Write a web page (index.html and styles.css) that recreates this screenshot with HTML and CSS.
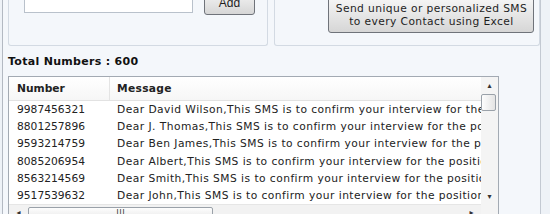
FILE: index.html
```html
<!DOCTYPE html>
<html lang="en">
<head>
  <meta charset="UTF-8">
  <title>Bulk SMS - Numbers</title>
  <link rel="stylesheet" href="styles.css">
</head>
<body>
  <div class="frame">
    <div class="groups">
      <div class="group group-left">
        <input class="textbox" type="text">
        <button class="btn btn-add">Add</button>
      </div>
      <div class="group group-right">
        <button class="btn btn-excel">Send unique or personalized SMS<br>to every Contact using Excel</button>
      </div>
    </div>

    <div class="total">Total Numbers : 600</div>

    <div class="grid">
      <div class="grid-body">
        <div class="grid-head">
          <div class="col-num">Number</div>
          <div class="col-msg">Message</div>
        </div>
        <div class="grid-row">
          <div class="col-num">9987456321</div>
          <div class="col-msg">Dear David Wilson,This SMS is to confirm your interview for the position</div>
        </div>
        <div class="grid-row">
          <div class="col-num">8801257896</div>
          <div class="col-msg">Dear J. Thomas,This SMS is to confirm your interview for the position</div>
        </div>
        <div class="grid-row">
          <div class="col-num">9593214759</div>
          <div class="col-msg">Dear Ben James,This SMS is to confirm your interview for the position</div>
        </div>
        <div class="grid-row">
          <div class="col-num">8085206954</div>
          <div class="col-msg">Dear Albert,This SMS is to confirm your interview for the position</div>
        </div>
        <div class="grid-row">
          <div class="col-num">8563214569</div>
          <div class="col-msg">Dear Smith,This SMS is to confirm your interview for the position</div>
        </div>
        <div class="grid-row">
          <div class="col-num">9517539632</div>
          <div class="col-msg">Dear John,This SMS is to confirm your interview for the position</div>
        </div>
        <div class="hscroll">
          <span class="arrow">&#9666;</span>
          <div class="hthumb"><span class="grip">|||</span></div>
          <span class="arrow arrow-right">&#9656;</span>
        </div>
      </div>
      <div class="vscroll">
        <span class="arrow">&#9652;</span>
        <div class="vthumb"></div>
        <div class="vtrack"></div>
        <span class="arrow">&#9662;</span>
      </div>
    </div>
  </div>
</body>
</html>
```

FILE: styles.css
```css
body {
  margin: 0;
  width: 550px;
  height: 214px;
  overflow: hidden;
  background-color: #eef2f7;
  font-family: "DejaVu Sans", Verdana, sans-serif;
  font-size: 10.7px;
  color: #222;
}

.frame {
  margin-left: 2px;
  width: 539px;
  height: 214px;
  box-sizing: border-box;
  border-left: 1px solid #b3b9c2;
  border-right: 1px solid #c3c9d2;
  background-color: #f4f7fb;
  padding-left: 5px;
  overflow: hidden;
}

.groups {
  display: flex;
  gap: 6px;
  height: 46px;
}

.group {
  box-sizing: border-box;
  height: 46px;
  border: 1px solid #d3dae3;
  border-top: none;
  border-radius: 0 0 3px 3px;
  display: flex;
  align-items: flex-start;
}

.group-left {
  width: 261px;
  padding-left: 15px;
  gap: 11px;
}

.group-right {
  width: 266px;
  padding-left: 53px;
}

.textbox {
  box-sizing: border-box;
  width: 169px;
  height: 13px;
  margin: 0;
  border: 1px solid #b9c1cb;
  border-top: none;
  background: #fff;
}

.btn {
  box-sizing: border-box;
  margin: 0;
  padding: 0;
  border: 1px solid #6f737a;
  border-radius: 3px;
  background: linear-gradient(#f6f6f6, #e6e6e6 50%, #d6d6d6);
  color: #1e1e1e;
  font-family: "DejaVu Sans", Verdana, sans-serif;
}

.btn-add {
  width: 51px;
  height: 25px;
  margin-top: -10px;
  font-family: "Liberation Sans", Arial, sans-serif;
  font-size: 12px;
}

.btn-excel {
  width: 206px;
  height: 36px;
  margin-top: -3px;
  font-size: 10.7px;
  line-height: 13px;
  letter-spacing: 0.4px;
}

.total {
  font-weight: bold;
  font-size: 11px;
  letter-spacing: 0.3px;
  height: 30px;
  line-height: 31px;
  color: #111;
}

.grid {
  display: flex;
  width: 491px;
  height: 200px;
  box-sizing: border-box;
  border: 1px solid #a3aab3;
  border-bottom: none;
  background: #fff;
}

.grid-body {
  flex: 1;
  min-width: 0;
  display: flex;
  flex-direction: column;
}

.grid-head,
.grid-row {
  display: flex;
  flex-shrink: 0;
  white-space: nowrap;
}

.grid-head {
  height: 23px;
  line-height: 23px;
  font-weight: bold;
  background: linear-gradient(#ffffff, #f6f6f6);
  border-bottom: 1px solid #e2e2e2;
}

.grid-head .col-num {
  border-right: 1px solid #e4e4e4;
}

.grid-head .col-msg {
  letter-spacing: 0.3px;
}

.grid-row {
  height: 17.2px;
  line-height: 17.2px;
}

.col-num {
  width: 101px;
  padding-left: 8px;
  box-sizing: border-box;
  flex-shrink: 0;
}

.col-msg {
  padding-left: 7px;
  overflow: hidden;
}

.grid-row .col-msg {
  letter-spacing: 0.45px;
}

.hscroll {
  height: 14px;
  display: flex;
  align-items: center;
  background: #f2f2f2;
  border-top: 1px solid #e6e6e6;
  font-size: 8px;
  color: #333;
}

.hscroll .arrow {
  width: 19px;
  text-align: center;
}

.hthumb {
  box-sizing: border-box;
  width: 185px;
  height: 13px;
  margin-top: 2px;
  border: 1px solid #9aa1a9;
  border-radius: 2px;
  background: linear-gradient(#fdfdfd, #e8e8e8);
  text-align: center;
  font-size: 9px;
  line-height: 11px;
}

.hscroll .arrow-right {
  margin-left: auto;
}

.vscroll {
  width: 17px;
  flex-shrink: 0;
  display: flex;
  flex-direction: column;
  align-items: center;
  background: #f4f4f4;
  font-size: 8px;
  color: #333;
}

.vscroll .arrow {
  height: 17px;
  line-height: 17px;
}

.vthumb {
  box-sizing: border-box;
  width: 15px;
  height: 17px;
  margin-right: 2px;
  border: 1px solid #9aa1a9;
  border-radius: 2px;
  background: linear-gradient(90deg, #fdfdfd, #e4e4e4);
}

.vtrack {
  height: 77px;
}
```
